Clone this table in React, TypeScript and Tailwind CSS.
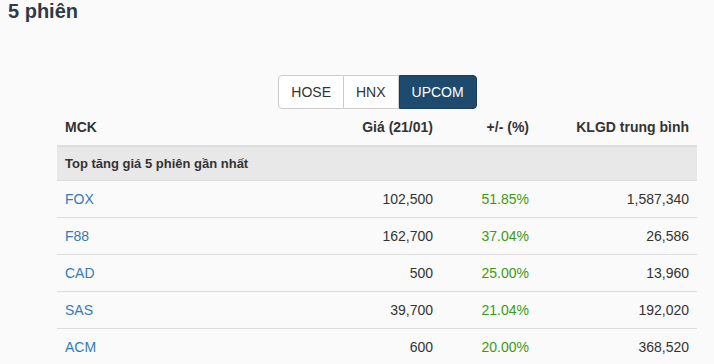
import React from "react";

const rows = [
  { mck: "FOX", gia: "102,500", pct: "51.85%", kl: "1,587,340" },
  { mck: "F88", gia: "162,700", pct: "37.04%", kl: "26,586" },
  { mck: "CAD", gia: "500", pct: "25.00%", kl: "13,960" },
  { mck: "SAS", gia: "39,700", pct: "21.04%", kl: "192,020" },
  { mck: "ACM", gia: "600", pct: "20.00%", kl: "368,520" },
];

export default function App() {
  return (
    <div
      className="w-[714px] h-[364px] overflow-hidden bg-[#fafafa] text-[#333] text-[14px]"
      style={{ fontFamily: '"Liberation Sans", Arial, sans-serif' }}
    >
      <h3 className="pl-[8px] text-[20px] leading-[22px] font-bold text-[#2f3a46]">5 phiên</h3>
      <div className="pl-[57px] pr-[17px] pt-[53px]">
        <div className="flex justify-center">
          <div className="flex h-[34px] pl-[1px]">
            <button className="h-[34px] px-[12px] bg-white border border-[#ccc] rounded-l-[4px] text-[14px] leading-[20px] text-[#333]">HOSE</button>
            <button className="h-[34px] px-[12px] bg-white border border-l-0 border-[#ccc] text-[14px] leading-[20px] text-[#333]">HNX</button>
            <button className="h-[34px] px-[12px] bg-[#1e4a6e] border border-[#183d5b] rounded-r-[4px] text-[14px] leading-[20px] text-white">UPCOM</button>
          </div>
        </div>
        <table className="w-[640px] table-fixed border-collapse">
          <colgroup>
            <col className="w-[200px]" />
            <col className="w-[184px]" />
            <col className="w-[96px]" />
            <col className="w-[160px]" />
          </colgroup>
          <thead>
            <tr className="border-b-2 border-[#ddd]">
              <th className="p-[8px] text-left font-bold leading-[20px]">MCK</th>
              <th className="p-[8px] text-right font-bold leading-[20px]">Giá (21/01)</th>
              <th className="p-[8px] text-right font-bold leading-[20px]">+/- (%)</th>
              <th className="p-[8px] text-right font-bold leading-[20px]">KLGD trung bình</th>
            </tr>
          </thead>
          <tbody>
            <tr className="bg-[#e8e8e8] border-b border-[#ddd]">
              <td colSpan={4} className="p-[8px] text-[13px] leading-[17px] font-bold">
                Top tăng giá 5 phiên gần nhất
              </td>
            </tr>
            {rows.map((r) => (
              <tr key={r.mck} className="border-b border-[#ddd]">
                <td className="p-[8px] leading-[20px] text-[#337ab7]">{r.mck}</td>
                <td className="p-[8px] leading-[20px] text-right">{r.gia}</td>
                <td className="p-[8px] leading-[20px] text-right text-[#3a9a12]">{r.pct}</td>
                <td className="p-[8px] leading-[20px] text-right">{r.kl}</td>
              </tr>
            ))}
          </tbody>
        </table>
      </div>
    </div>
  );
}
